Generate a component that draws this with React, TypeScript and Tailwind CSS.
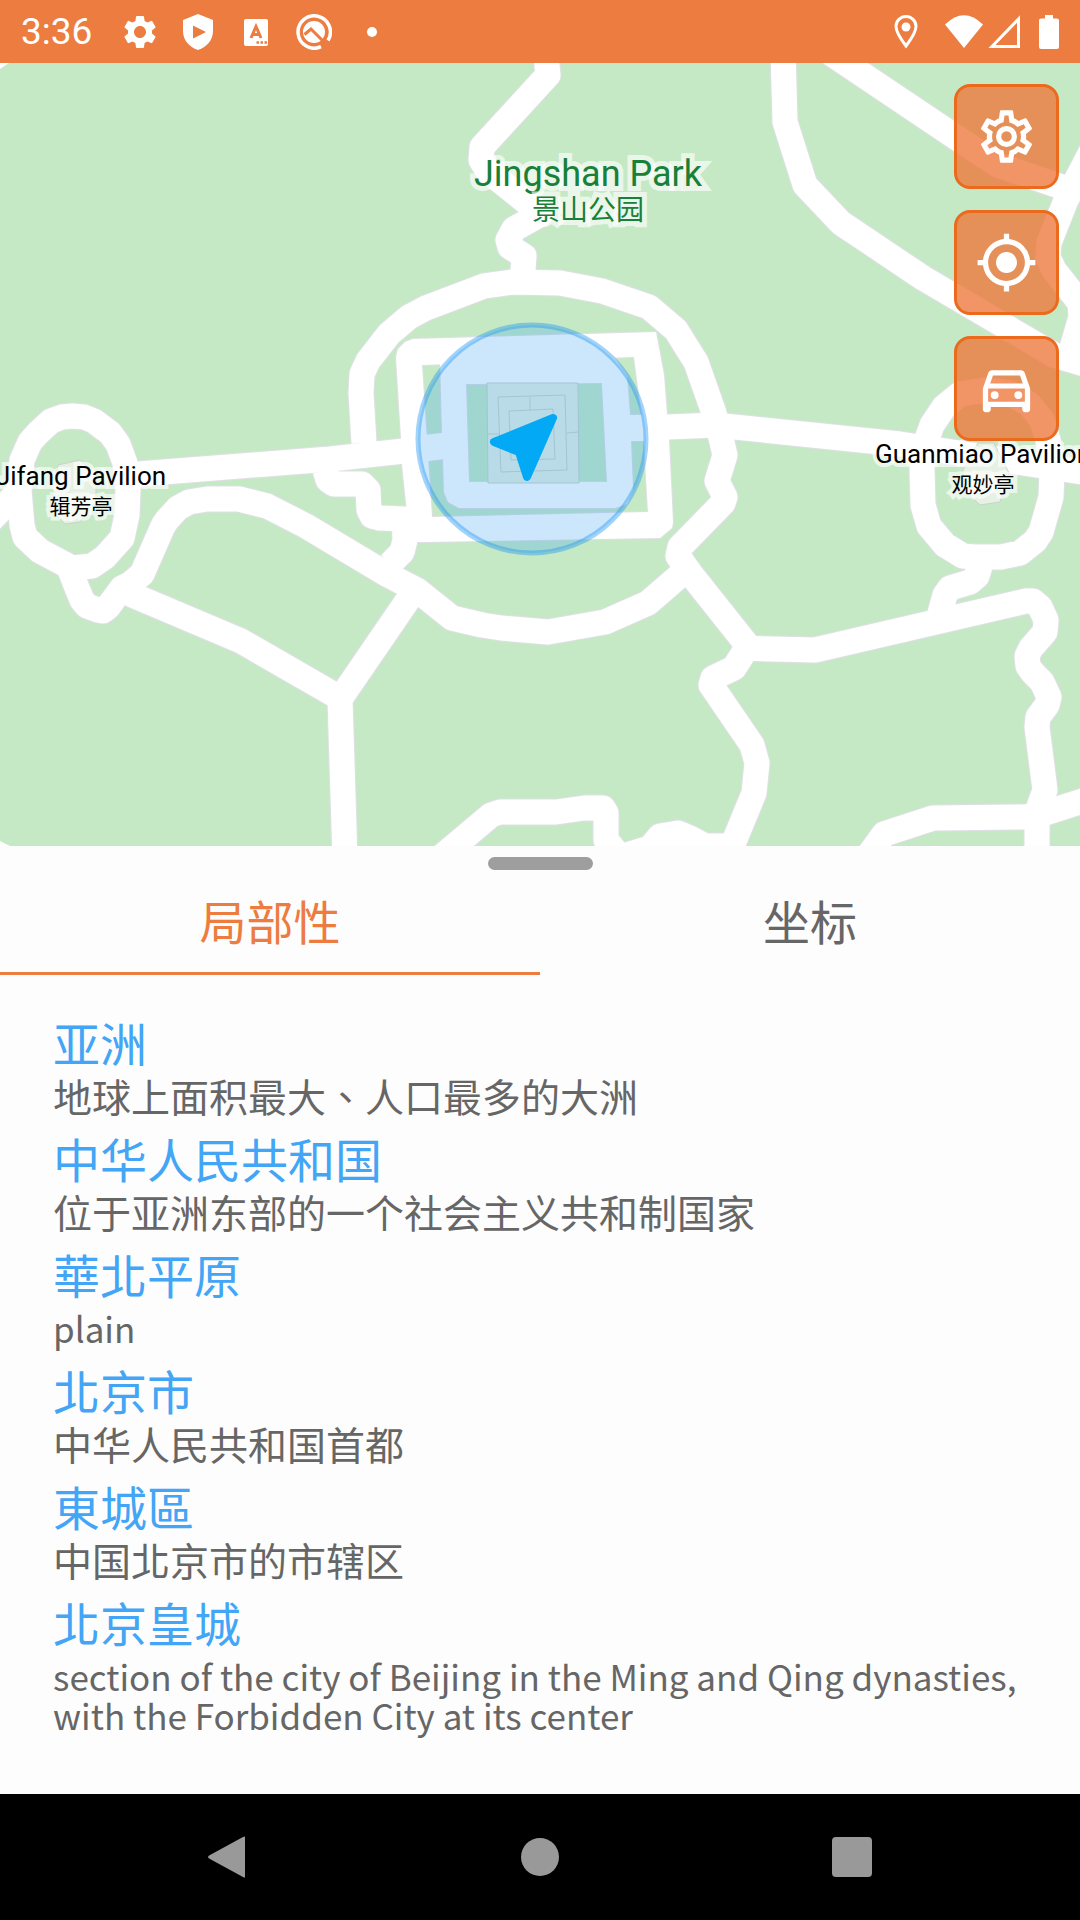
import { useState } from 'react';
import { MdMyLocation, MdOutlineDirectionsCar, MdSettings } from 'react-icons/md';

const places = [
  { name: '亚洲', description: '地球上面积最大、人口最多的大洲' },
  { name: '中华人民共和国', description: '位于亚洲东部的一个社会主义共和制国家' },
  { name: '華北平原', description: 'plain', lang: 'en' },
  { name: '北京市', description: '中华人民共和国首都' },
  { name: '東城區', description: '中国北京市的市辖区' },
  {
    name: '北京皇城',
    description: 'section of the city of Beijing in the Ming and Qing dynasties, with the Forbidden City at its center',
    lang: 'en',
  },
];

const tabs = ['局部性', '坐标'];

// Centre lines of the park paths
const roads = [
  'M545 45L548 75L482 147L481 160L488 171L541 214L514 229L508 240L510 247L524 256L522 285',
  'M364 443L361 393L362 374L368 361L389 334L409 317L426 308L484 286L513 282L560 283L602 291L649 307L676 330L696 362L714 413L721 438L725 455L717 481L725 497L723 503L680 547L678 556L690 573',
  'M692 565L678 577L648 603L605 622L548 632L501 628L482 625L452 618L417 590L388 575L306 526L267 506L239 499L207 499L189 502L178 508L167 520L163 526L142 574L130 584L122 588L108 607L103 611L98 610L87 606L82 600L77 588L70 570',
  'M130 594L241 641L340 698',
  'M414 591L340 699L345 860',
  'M22 460L30 442L38 433L51 421L62 417L72 416L84 417L94 421L110 433L118 444L125 463L128 490L127 515L122 538L105 557L92 566L72 568L40 551L25 537L22 525L19 490Z',
  'M-15 526L20 490',
  'M125 475L330 459L404 451L445 446',
  'M325 470L328 480L334 484L362 484L368 490L369 510L372 516L380 518L404 519L405 540L402 552L390 564',
  'M620 429L715 425L900 444L1095 474',
  'M922 470L923 505L929 526L945 545L963 556L975 557L1001 557L1020 553L1035 541L1041 532L1051 497L1052 470L1048 440L1042 420L1030 405L1010 393L986 390L960 394L944 407L932 425L923 450Z',
  'M982 560L977 576L970 582L950 588L945 595L938 620',
  'M735 648L815 650L1026 601L1033 601L1040 607L1046 620L1045 632L1031 648L1027 656L1028 666L1033 673L1042 682L1049 697L1047 705L1038 717L1037 727L1045 790L1037 812L1037 860',
  'M1095 797L1045 813L1025 817L933 818L884 834L860 867',
  'M680 562L690 573L748 646L734 668L713 678L711 685L752 745L757 763L754 793L724 866',
  'M440 858L491 815L500 812L556 812L584 808L603 808L606 813L606 840L620 857L650 848L660 836L678 833L690 838L705 846L740 846',
  'M783 50L785 122L805 185L841 223L923 278L1054 355L1095 367',
  'M820 46L954 136L998 165L1062 187',
  'M1092 150L1066 200L1049 243L1048 257L1054 270L1080 303L1081 317L1069 358',
];

const wall =
  'M396 357L398 349L405 342L413 339L656 332L664 375L667 414L669 440L673 522L672 528L660 538L427 542L410 542L402 464L401 438ZM422 365L632 357L634 357L643 425L648 512L432 517Z';

const innerRing =
  'M440 355L613 355L627 376L630 415L645 415L645 441L631 441L633 490L627 504L615 508L459 508L448 502L444 492L443 459L428 461L425 435L442 433ZM466 384L469 482L607 482L602 383Z';

interface MapLabelProps {
  x: number;
  y: number;
  title: string;
  subtitle: string;
  large?: boolean;
}

function MapLabel({ x, y, title, subtitle, large }: MapLabelProps) {
  return (
    <g
      textAnchor="middle"
      fill={large ? '#188038' : '#000'}
      stroke="#fff"
      strokeOpacity="0.65"
      strokeWidth={large ? 10 : 8}
      paintOrder="stroke"
      className="font-['Roboto','Noto_Sans_CJK_SC',sans-serif]"
    >
      <text x={x} y={y} fontSize={large ? 36 : 26}>{title}</text>
      <text x={x} y={y + (large ? 34 : 29)} fontSize={large ? 28 : 21}>{subtitle}</text>
    </g>
  );
}

function ParkMap() {
  return (
    <svg
      viewBox="0 63 1080 783"
      preserveAspectRatio="xMidYMid slice"
      className="absolute inset-0 h-full w-full"
      role="img"
      aria-label="Jingshan Park"
    >
      <rect y="63" width="1080" height="783" fill="#c5e9c5" />
      <path d="M0 63H9L0 69ZM0 841L10 846H0Z" fill="#fff" />
      <g fill="none" strokeLinejoin="round">
        <g stroke="#e0dfe6" strokeWidth="27">
          {roads.map((d) => <path key={d} d={d} />)}
        </g>
        <path d={wall} stroke="#e0dfe6" strokeWidth="2" />
        <path d={innerRing} stroke="#e0dfe6" strokeWidth="2" />
        <g stroke="#fff" strokeWidth="25">
          {roads.map((d) => <path key={d} d={d} />)}
        </g>
      </g>
      <path d={wall} fill="#fff" fillRule="evenodd" />
      <path d={innerRing} fill="#fff" fillRule="evenodd" />

      {/* Pavilion footprints */}
      <g fill="#e6f0e4" stroke="#c9d3c8">
        <path d="M487 383H578L579 483H488Z" />
        <path
          d="M498 397L565 395L567 470L501 472ZM509 411L553 409L555 459L511 460ZM530 397V410M488 434L499 434M567 433L578 432"
          fill="none"
        />
        <path d="M58 465L80 460L96 475V500L80 522L65 524L50 508Z" />
        <path d="M963 470L978 443H994L1009 473L1000 502L980 505L964 490Z" />
      </g>

      <circle cx="532" cy="439" r="114" fill="#2196f3" fillOpacity="0.23" />
      <circle cx="532" cy="439" r="114" fill="none" stroke="#2196f3" strokeOpacity="0.42" strokeWidth="5" />
      <path
        d="M553 418L494 442L519 452L527 477Z"
        fill="#03a9f4"
        stroke="#03a9f4"
        strokeWidth="8"
        strokeLinejoin="round"
      />

      <MapLabel x={588} y={186} title="Jingshan Park" subtitle="景山公园" large />
      <MapLabel x={81} y={485} title="Jifang Pavilion" subtitle="辑芳亭" />
      <MapLabel x={983} y={463} title="Guanmiao Pavilion" subtitle="观妙亭" />
    </svg>
  );
}

function CogIcon() {
  return (
    <svg viewBox="0 0 24 24" fill="currentColor" className="size-[63px]">
      <path d="M12 8A4 4 0 0 1 16 12A4 4 0 0 1 12 16A4 4 0 0 1 8 12A4 4 0 0 1 12 8M12 10A2 2 0 0 0 10 12A2 2 0 0 0 12 14A2 2 0 0 0 14 12A2 2 0 0 0 12 10M10 22C9.75 22 9.54 21.82 9.5 21.58L9.13 18.93C8.5 18.68 7.96 18.34 7.44 17.94L4.95 18.95C4.73 19.03 4.46 18.95 4.34 18.73L2.34 15.27C2.21 15.05 2.27 14.78 2.46 14.63L4.57 12.97L4.5 12L4.57 11L2.46 9.37C2.27 9.22 2.21 8.95 2.34 8.73L4.34 5.27C4.46 5.05 4.73 4.96 4.95 5.05L7.44 6.05C7.96 5.66 8.5 5.32 9.13 5.07L9.5 2.42C9.54 2.18 9.75 2 10 2H14C14.25 2 14.46 2.18 14.5 2.42L14.87 5.07C15.5 5.32 16.04 5.66 16.56 6.05L19.05 5.05C19.27 4.96 19.54 5.05 19.66 5.27L21.66 8.73C21.79 8.95 21.73 9.22 21.54 9.37L19.43 11L19.5 12L19.43 13L21.54 14.63C21.73 14.78 21.79 15.05 21.66 15.27L19.66 18.73C19.54 18.95 19.27 19.04 19.05 18.95L16.56 17.95C16.04 18.34 15.5 18.68 14.87 18.93L14.5 21.58C14.46 21.82 14.25 22 14 22H10M11.25 4L10.88 6.61C9.68 6.86 8.62 7.5 7.85 8.39L5.44 7.35L4.69 8.65L6.8 10.2C6.4 11.37 6.4 12.64 6.8 13.8L4.68 15.36L5.43 16.66L7.86 15.62C8.63 16.5 9.68 17.14 10.87 17.38L11.24 20H12.76L13.13 17.39C14.32 17.14 15.37 16.5 16.14 15.62L18.57 16.66L19.32 15.36L17.2 13.81C17.6 12.64 17.6 11.37 17.2 10.2L19.31 8.65L18.56 7.35L16.15 8.39C15.38 7.5 14.32 6.86 13.12 6.62L12.75 4H11.25Z" />
    </svg>
  );
}

interface MapButtonProps {
  label: string;
  children: React.ReactNode;
}

function MapButton({ label, children }: MapButtonProps) {
  return (
    <button
      aria-label={label}
      className="flex size-[105px] items-center justify-center rounded-2xl border-3 border-[#ec6a1c] bg-[#ee7538]/77 text-white"
    >
      {children}
    </button>
  );
}

function StatusBar() {
  return (
    <header className="flex h-[63px] items-center justify-between bg-[#ec7c40] px-[21px] text-white">
      <div className="flex items-center gap-[22px]">
        <span className="mr-2 font-['Roboto',sans-serif] text-[37px] leading-none">3:36</span>
        <MdSettings className="size-10 -mx-0.5" />
        <svg viewBox="0 0 36 36" className="size-9" fill="currentColor">
          <path fillRule="evenodd" d="M18 0L33 6V17C33 26 27 33 18 36C9 33 3 26 3 17V6ZM13 11.500V24.500L26 18Z" />
        </svg>
        <svg viewBox="0 0 36 36" className="size-9">
          <rect x="6" y="5" width="24" height="27" rx="2" fill="currentColor" />
          <path d="M13 24L18 12.500L23 24M15 20.500H21" fill="none" stroke="#ec7c40" strokeWidth="3" />
          <path d="M18.500 28.500H21M22.500 28.500H25M26.500 28.500H29" stroke="#ec7c40" strokeWidth="2.500" />
        </svg>
        <svg viewBox="0 0 36 36" className="size-9">
          <path d="M25 32.700A16.200 16.200 0 1 1 32 26.500" fill="none" stroke="currentColor" strokeWidth="3.500" />
          <circle cx="18" cy="18" r="11" fill="currentColor" />
          <path d="M8.500 20.500L15 15L30 30" fill="none" stroke="#ec7c40" strokeWidth="3" />
        </svg>
        <svg viewBox="0 0 36 36" className="size-9" fill="currentColor">
          <circle cx="18" cy="18" r="5" />
        </svg>
      </div>
      <div className="flex items-center">
        <svg viewBox="0 0 24 34" className="mr-[26px] h-[34px] w-6" fill="none" stroke="currentColor">
          <path d="M12 31C6 23 2 17 2 11.500A10 10 0 0 1 22 11.500C22 17 18 23 12 31Z" strokeWidth="3" />
          <circle cx="12" cy="12" r="4.500" fill="currentColor" stroke="none" />
        </svg>
        <svg viewBox="0 0 40 34" className="mr-1 h-[34px] w-10" fill="currentColor">
          <path d="M1 9.500Q20 -9 39 9.500L20 33Z" />
        </svg>
        <svg viewBox="0 0 32 34" className="mr-[19px] h-[34px] w-8" fill="none" stroke="currentColor">
          <path d="M4 31.500L30.500 4V31.500Z" strokeWidth="3" />
        </svg>
        <svg viewBox="0 0 20 34" className="h-[34px] w-5" fill="currentColor">
          <path d="M6 0H14V3.500H18Q20 3.500 20 5.500V32Q20 34 18 34H2Q0 34 0 32V5.500Q0 3.500 2 3.500H6Z" />
        </svg>
      </div>
    </header>
  );
}

function NavigationBar() {
  return (
    <nav className="grid h-[126px] grid-cols-3 place-items-center bg-black px-[72px] text-[#999]">
      <button aria-label="Back">
        <svg viewBox="0 0 42 42" className="size-[42px]" fill="currentColor">
          <path d="M38 1V41Q38 42 36 41L3 23Q-1 21 3 19L36 1Q38 0 38 1Z" />
        </svg>
      </button>
      <button aria-label="Home" className="size-[38px] rounded-full bg-[#999]" />
      <button aria-label="Recent apps" className="size-10 rounded bg-[#999]" />
    </nav>
  );
}

export default function App() {
  const [active, setActive] = useState(0);

  return (
    <div className="flex min-h-screen flex-col bg-[#fdfdfd] font-['Noto_Sans_CJK_TC',sans-serif]">
      <StatusBar />

      <main className="flex flex-1 flex-col">
        <section className="relative min-h-[462px] flex-1 overflow-hidden">
          <ParkMap />
          <div className="absolute top-[21px] right-[21px] flex flex-col gap-[21px]">
            <MapButton label="Settings">
              <CogIcon />
            </MapButton>
            <MapButton label="My location">
              <MdMyLocation className="size-[63px]" />
            </MapButton>
            <MapButton label="Directions">
              <MdOutlineDirectionsCar className="size-[63px]" />
            </MapButton>
          </div>
        </section>

        <section className="pt-[11px]">
          <div className="mx-auto h-[13px] w-[105px] rounded-full bg-[#9e9e9e]" />

          <div role="tablist" className="grid grid-cols-2">
            {tabs.map((tab, i) => (
              <button
                key={tab}
                role="tab"
                aria-selected={active === i}
                onClick={() => setActive(i)}
                className={`h-[105px] border-b-3 pb-1 text-[47px] leading-none ${
                  active === i ? 'border-[#ec7c40] text-[#ec7c40]' : 'border-transparent text-[#666]'
                }`}
              >
                {tab}
              </button>
            ))}
          </div>

          <ul className="flex flex-col gap-[9px] px-[53px] pt-[33px] pb-[60px]">
            {places.map((place) => (
              <li key={place.name}>
                <a href="#" className="block text-[47px] leading-[68px] text-[#42a5f5]">
                  {place.name}
                </a>
                <p
                  lang={place.lang}
                  className={`leading-[39px] text-[#666] ${place.lang === 'en' ? 'text-[35px]' : 'text-[39px]'}`}
                >
                  {place.description}
                </p>
              </li>
            ))}
          </ul>
        </section>
      </main>

      <NavigationBar />
    </div>
  );
}
